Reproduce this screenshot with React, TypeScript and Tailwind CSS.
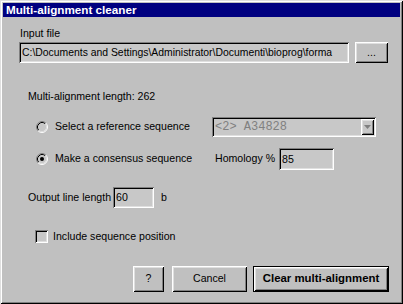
import React from 'react';

const raised =
  'shadow-[inset_1px_1px_0_#fff,inset_-1px_-1px_0_#000,inset_2px_2px_0_#dfdfdf,inset_-2px_-2px_0_#808080]';
const sunken =
  'shadow-[inset_1px_1px_0_#808080,inset_-1px_-1px_0_#fff,inset_2px_2px_0_#000,inset_-2px_-2px_0_#dfdfdf]';

const Radio = ({ checked }: { checked?: boolean }) => (
  <svg width="12" height="12" viewBox="0 0 12 12" className="shrink-0">
    <circle cx="6" cy="6" r="5" fill="#c8c8c8" />
    <path d="M2.11 9.89 A5.5 5.5 0 0 1 9.89 2.11" stroke="#808080" fill="none" />
    <path d="M9.89 2.11 A5.5 5.5 0 0 1 2.11 9.89" stroke="#fff" fill="none" />
    <path d="M2.82 9.18 A4.5 4.5 0 0 1 9.18 2.82" stroke="#000" fill="none" />
    <path d="M9.18 2.82 A4.5 4.5 0 0 1 2.82 9.18" stroke="#dfdfdf" fill="none" />
    {checked && <circle cx="6" cy="6" r="2" fill="#000" />}
  </svg>
);

export default function App() {
  return (
    <div className="w-[403px] h-[304px] bg-[#c0c0c0] p-[3px] font-['Liberation_Sans',Arial,sans-serif] text-[10.6px] text-black shadow-[inset_1px_1px_0_#dfdfdf,inset_-1px_-1px_0_#000,inset_2px_2px_0_#fff,inset_-2px_-2px_0_#808080]">
      {/* title bar */}
      <div className="h-[14px] bg-[#000080] text-white font-bold text-[11.7px] leading-[14px] pl-[3px] whitespace-nowrap">
        Multi-alignment cleaner
      </div>

      <div className="mt-[10px] ml-[17px] h-[13px] leading-[13px]">Input file</div>

      <div className="mt-[2px] ml-[16px] flex">
        <div className={`w-[330px] h-[21px] bg-[#c8c8c8] ${sunken} pl-[3px] leading-[21px] overflow-hidden whitespace-nowrap`}>
          <span className="text-[10.4px]">C:\Documents and Settings\Administrator\Documenti\bioprog\forma</span>
        </div>
        <div className={`ml-[6px] w-[33px] h-[21px] ${raised} flex items-center justify-center`}>...</div>
      </div>

      <div className="mt-[27px] ml-[25px] h-[13px] leading-[13px]">Multi-alignment length: 262</div>

      <div className="mt-[14px] ml-[33px] h-[20px] flex items-center">
        <Radio />
        <span className="ml-[7px] w-[157px] whitespace-nowrap">Select a reference sequence</span>
        <div className={`w-[164px] h-[20px] bg-[#c8c8c8] ${sunken} flex items-center pl-[3px] pr-[2px]`}>
          <span className="flex-1 font-['Liberation_Mono',monospace] text-[12px] text-[#808080] whitespace-nowrap">
            &lt;2&gt; A34828
          </span>
          <div className={`w-[13px] h-[16px] ${raised} flex items-center justify-center`}>
            <svg width="7" height="4" viewBox="0 0 7 4">
              <path d="M0 0 H7 L3.5 4 Z" fill="#808080" />
            </svg>
          </div>
        </div>
      </div>

      <div className="mt-[11px] ml-[33px] h-[22px] flex items-center">
        <Radio checked />
        <span className="ml-[7px] w-[160px] whitespace-nowrap">Make a consensus sequence</span>
        <span className="w-[64px] whitespace-nowrap">Homology %</span>
        <div className={`w-[55px] h-[22px] bg-[#c8c8c8] ${sunken} px-[3px] leading-[22px]`}>85</div>
      </div>

      <div className="mt-[17px] ml-[25px] h-[21px] flex items-center">
        <span className="w-[85px] whitespace-nowrap">Output line length</span>
        <div className={`w-[41px] h-[21px] bg-[#c8c8c8] ${sunken} px-[3px] leading-[21px]`}>60</div>
        <span className="ml-[7px]">b</span>
      </div>

      <div className="mt-[22px] ml-[32px] h-[13px] flex items-center">
        <div className={`w-[13px] h-[13px] bg-[#c8c8c8] ${sunken}`} />
        <span className="ml-[5px] whitespace-nowrap">Include sequence position</span>
      </div>

      <div className="mt-[23px] pr-[11px] flex justify-end">
        <div className={`w-[31px] h-[26px] ${raised} flex items-center justify-center`}>?</div>
        <div className={`ml-[8px] w-[75px] h-[26px] ${raised} flex items-center justify-center`}>Cancel</div>
        <div className="ml-[6px] w-[136px] h-[26px] border border-black">
          <div className={`w-full h-full ${raised} flex items-center justify-center font-bold text-[11.4px] whitespace-nowrap`}>
            Clear multi-alignment
          </div>
        </div>
      </div>
    </div>
  );
}
